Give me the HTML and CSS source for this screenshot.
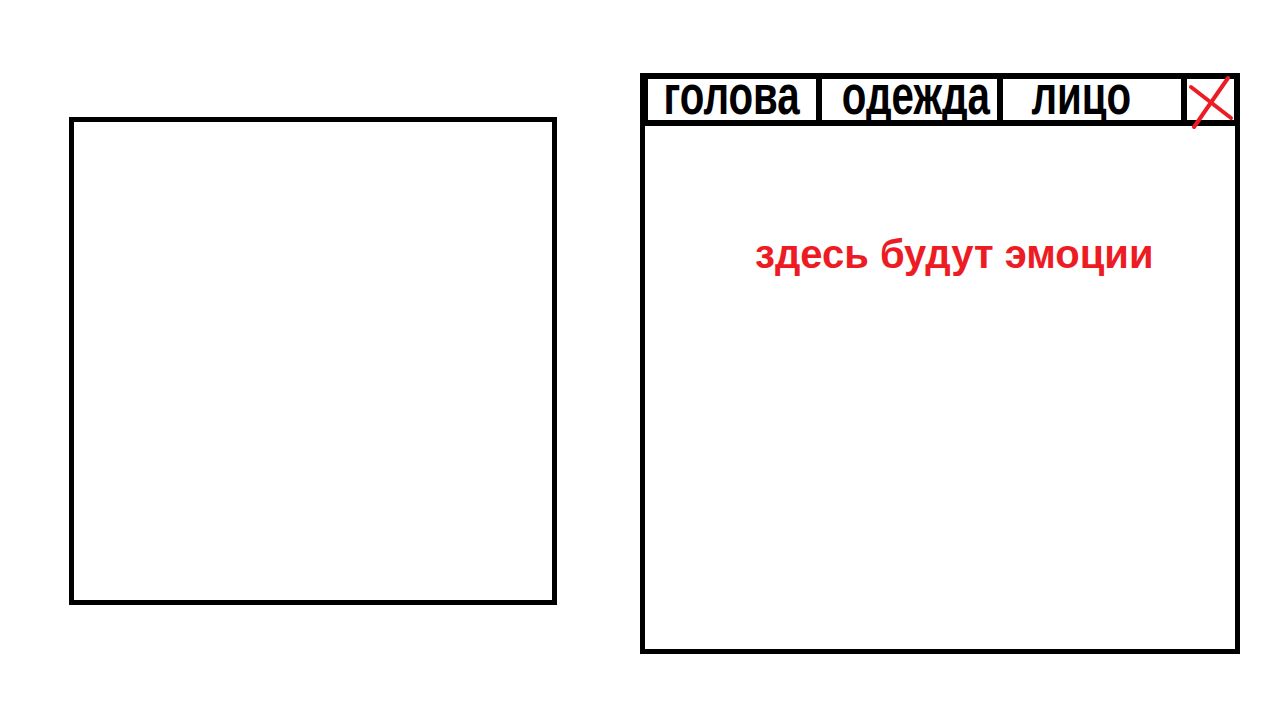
FILE: index.html
```html
<!DOCTYPE html>
<html lang="ru">
<head>
    <meta charset="UTF-8">
    <meta name="viewport" content="width=device-width, initial-scale=1.0">
    <title>Редактор персонажа</title>
    <link rel="stylesheet" href="styles.css">
</head>
<body>
    <div class="page">
        <div class="preview"></div>

        <div class="panel">
            <div class="tabs">
                <div class="tab tab-head"><span>голова</span></div>
                <div class="tab tab-clothes"><span>одежда</span></div>
                <div class="tab tab-face"><span>лицо</span></div>
                <div class="close">
                    <svg width="47" height="41" viewBox="0 0 47 41">
                        <line x1="4" y1="8" x2="44" y2="39" />
                        <line x1="41" y1="-1" x2="7" y2="48" />
                    </svg>
                </div>
            </div>
            <div class="panel-body">
                <p class="placeholder">здесь будут эмоции</p>
            </div>
        </div>
    </div>
</body>
</html>
```

FILE: styles.css
```css
body {
    margin: 0;
    padding: 0;
    background-color: #fff;
    font-family: "Liberation Sans", Arial, sans-serif;
}
.page {
    display: flex;
    align-items: flex-start;
    gap: 83px;
    padding: 73px 0 0 69px;
}
.preview {
    width: 488px;
    height: 488px;
    margin-top: 44px;
    border: 5px solid #000;
    box-sizing: border-box;
}
.panel {
    width: 600px;
    height: 581px;
    border: 5px solid #000;
    box-sizing: border-box;
    display: flex;
    flex-direction: column;
}
.tabs {
    display: flex;
    gap: 6px;
    background-color: #000;
    padding: 1px 0 6px 3px;
}
.tab {
    height: 41px;
    box-sizing: border-box;
    display: flex;
    justify-content: center;
    align-items: flex-start;
    background-color: #fff;
    line-height: 31px;
    font-size: 56px;
    font-weight: bold;
    color: #000;
    white-space: nowrap;
}
.tab span {
    display: inline-block;
    transform: scaleX(0.72);
}
.tab-head {
    width: 168px;
}
.tab-clothes {
    width: 175px;
    padding-left: 12px;
}
.tab-face {
    width: 178px;
    padding-right: 22px;
}
.close {
    width: 47px;
    height: 41px;
    background-color: #fff;
}
.close svg {
    display: block;
    overflow: visible;
}
.close line {
    stroke: #ed1c24;
    stroke-width: 4;
    stroke-linecap: round;
}
.panel-body {
    flex: 1;
    padding: 105px 0 0 110px;
}
.placeholder {
    margin: 0;
    font-size: 40px;
    line-height: 46px;
    font-weight: bold;
    color: #ed1c24;
    white-space: nowrap;
}
```
